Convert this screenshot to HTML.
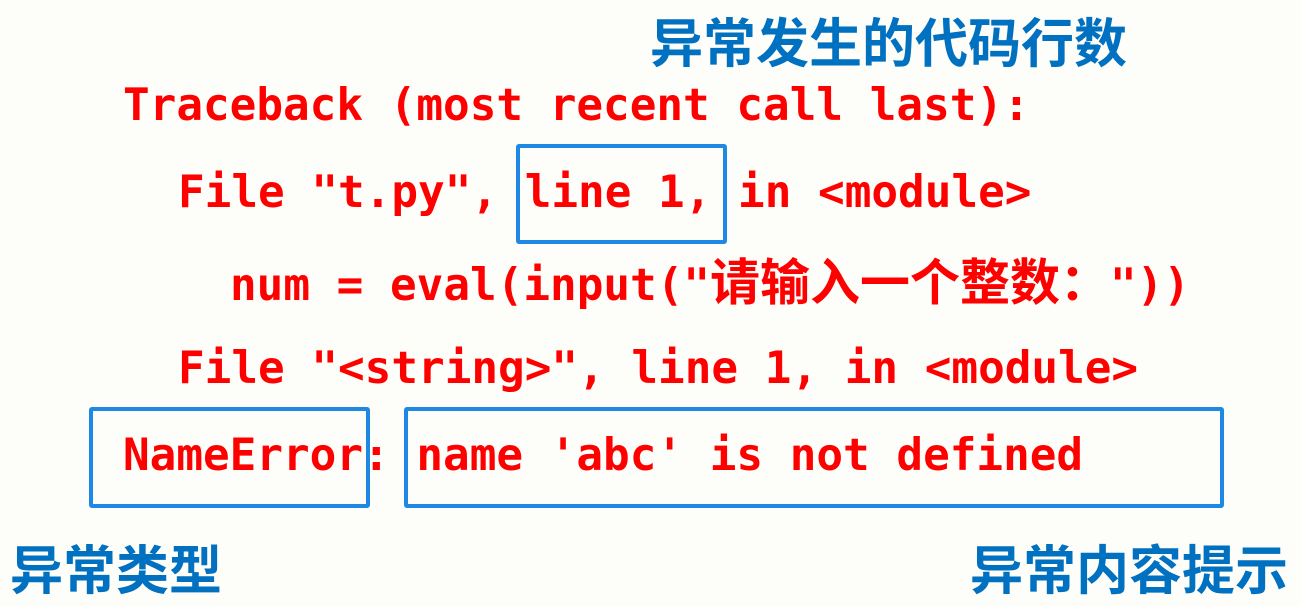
<!DOCTYPE html>
<html><head><meta charset="utf-8"><style>
html,body{margin:0;padding:0}
body{width:1301px;height:606px;background:#fdfdf9;position:relative;overflow:hidden}
.m{position:absolute;font-family:"DejaVu Sans Mono","Liberation Mono","Noto Sans CJK SC",monospace;font-weight:bold;font-size:44.3px;line-height:1;color:#ff0000;white-space:pre}
.c{font-family:"Noto Sans CJK SC",sans-serif;font-size:50px}
.h{position:absolute;font-family:"Noto Sans CJK SC",sans-serif;font-weight:bold;font-size:53px;line-height:1;color:#0070c0;white-space:pre}
.b{position:absolute;border:4px solid #1e88e5;border-radius:3px;box-sizing:border-box}
</style></head><body>
<div class="h" style="left:650px;top:14px">异常发生的代码行数</div>
<div class="m" style="left:123px;top:84px">Traceback (most recent call last):</div>
<div class="m" style="left:178px;top:171px">File "t.py", line 1, in &lt;module&gt;</div>
<div class="m" style="left:230px;top:254px">num = eval(input("<span class="c">请输入一个整数：</span>"))</div>
<div class="m" style="left:178px;top:347px">File "&lt;string&gt;", line 1, in &lt;module&gt;</div>
<div class="m" style="left:123px;top:434px">NameError: name 'abc' is not defined</div>
<div class="b" style="left:516px;top:144px;width:211px;height:100px"></div>
<div class="b" style="left:89px;top:407px;width:281px;height:101px"></div>
<div class="b" style="left:404px;top:407px;width:820px;height:101px"></div>
<div class="h" style="left:10px;top:541px">异常类型</div>
<div class="h" style="left:970px;top:541px">异常内容提示</div>
</body></html>
